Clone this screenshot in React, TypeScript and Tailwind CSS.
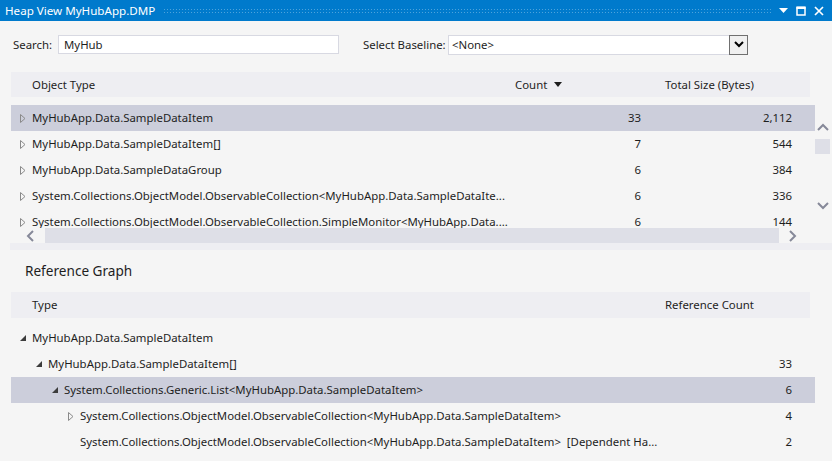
import React from "react";

const Hollow = () => (
  <svg width="6" height="9" viewBox="0 0 6 9" className="shrink-0">
    <polygon points="0.5,0.5 5,4.5 0.5,8.5" fill="none" stroke="#8a8a8a" strokeWidth="1" />
  </svg>
);

const Filled = () => (
  <svg width="6" height="6" viewBox="0 0 6 6" className="shrink-0">
    <polygon points="6,0 6,6 0,6" fill="#3c3c3c" />
  </svg>
);

type TopRow = { name: string; count: string; size: string; sel?: boolean };

const topRows: TopRow[] = [
  { name: "MyHubApp.Data.SampleDataItem", count: "33", size: "2,112", sel: true },
  { name: "MyHubApp.Data.SampleDataItem[]", count: "7", size: "544" },
  { name: "MyHubApp.Data.SampleDataGroup", count: "6", size: "384" },
  {
    name: "System.Collections.ObjectModel.ObservableCollection<MyHubApp.Data.SampleDataIte...",
    count: "6",
    size: "336",
  },
  {
    name: "System.Collections.ObjectModel.ObservableCollection.SimpleMonitor<MyHubApp.Data....",
    count: "6",
    size: "144",
  },
];

type GRow = { name: string; count: string; level: number; icon: "filled" | "hollow" | "none"; sel?: boolean };

const graphRows: GRow[] = [
  { name: "MyHubApp.Data.SampleDataItem", count: "", level: 0, icon: "filled" },
  { name: "MyHubApp.Data.SampleDataItem[]", count: "33", level: 1, icon: "filled" },
  {
    name: "System.Collections.Generic.List<MyHubApp.Data.SampleDataItem>",
    count: "6",
    level: 2,
    icon: "filled",
    sel: true,
  },
  {
    name: "System.Collections.ObjectModel.ObservableCollection<MyHubApp.Data.SampleDataItem>",
    count: "4",
    level: 3,
    icon: "hollow",
  },
  {
    name: "System.Collections.ObjectModel.ObservableCollection<MyHubApp.Data.SampleDataItem>  [Dependent Ha...",
    count: "2",
    level: 3,
    icon: "none",
  },
];

const Chevron = ({ dir }: { dir: "up" | "down" | "left" | "right" }) => {
  const d =
    dir === "up"
      ? "M1 7 L6 2 L11 7"
      : dir === "down"
      ? "M1 2 L6 7 L11 2"
      : dir === "left"
      ? "M7 1 L2 6 L7 11"
      : "M2 1 L7 6 L2 11";
  const w = dir === "up" || dir === "down" ? 12 : 9;
  const h = dir === "up" || dir === "down" ? 9 : 12;
  return (
    <svg width={w} height={h} viewBox={`0 0 ${w} ${h}`}>
      <path d={d} fill="none" stroke="#868999" strokeWidth="2" />
    </svg>
  );
};

export default function App() {
  return (
    <div className="w-[832px] h-[461px] overflow-hidden bg-[#F5F5F5] flex flex-col font-['Segoe_UI','Noto_Sans',sans-serif] text-[11.4px] text-[#1E1E1E] leading-[16px]">
      {/* Title bar */}
      <div className="h-[21px] bg-[#007ACC] flex items-center pl-[5px] pr-[8px] shrink-0">
        <span className="text-white text-[11.6px] whitespace-nowrap">Heap View MyHubApp.DMP</span>
        <div className="flex-1 ml-[8px] mr-[6px] h-[5px] bg-[radial-gradient(circle,#4da3dc_0.7px,transparent_0.9px)] bg-[length:3px_3px]" />
        <div className="flex items-center gap-[8px]">
          <svg width="9" height="5" viewBox="0 0 9 5">
            <polygon points="0,0 9,0 4.5,5" fill="#ffffff" />
          </svg>
          <svg width="10" height="10" viewBox="0 0 10 10">
            <rect x="1" y="1.5" width="8" height="7.5" fill="none" stroke="#ffffff" strokeWidth="1.5" />
            <rect x="0.5" y="0.5" width="9" height="2.5" fill="#ffffff" />
          </svg>
          <svg width="10" height="10" viewBox="0 0 10 10">
            <path d="M1 1 L9 9 M9 1 L1 9" stroke="#ffffff" strokeWidth="1.7" />
          </svg>
        </div>
      </div>

      {/* Search row */}
      <div className="mt-[13px] h-[21px] flex items-center pl-[13px] shrink-0">
        <span className="w-[45px] whitespace-nowrap">Search:</span>
        <div className="w-[281px] h-[19px] bg-white border border-[#D8D9E2] flex items-center pl-[5px]">MyHub</div>
        <span className="ml-[24px] w-[85px] whitespace-nowrap">Select Baseline:</span>
        <div className="w-[300px] h-[20px] bg-white border border-[#D8D9E2] flex items-center">
          <span className="flex-1 pl-[3px]">&lt;None&gt;</span>
          <div className="w-[19px] h-[20px] -mr-[1px] border border-[#707070] bg-[#F0F0F0] flex items-center justify-center">
            <svg width="10" height="7" viewBox="0 0 10 7">
              <path d="M1 1 L5 5 L9 1" fill="none" stroke="#000" strokeWidth="2" />
            </svg>
          </div>
        </div>
      </div>

      {/* Top grid header */}
      <div className="mt-[17px] ml-[11px] w-[799px] h-[25px] bg-[#EEEEF2] flex items-center shrink-0">
        <span className="pl-[21px] w-[504px]">Object Type</span>
        <span className="flex items-center gap-[7px] w-[150px]">
          Count
          <svg width="8" height="5" viewBox="0 0 8 5">
            <polygon points="0,0 8,0 4,5" fill="#1E1E1E" />
          </svg>
        </span>
        <span>Total Size (Bytes)</span>
      </div>

      {/* Top grid body */}
      <div className="mt-[8px] flex shrink-0">
        <div className="ml-[11px] w-[804px] flex flex-col">
          <div className="h-[123px] overflow-hidden">
            {topRows.map((r, i) => (
              <div
                key={i}
                className={`h-[26px] flex items-center ${r.sel ? "bg-[#CCCEDB]" : ""}`}
              >
                <div className="w-[504px] flex items-center pl-[9px] gap-[6px] whitespace-nowrap overflow-hidden">
                  <Hollow />
                  <span>{r.name}</span>
                </div>
                <span className="w-[126px] text-right">{r.count}</span>
                <span className="w-[151px] text-right">{r.size}</span>
              </div>
            ))}
          </div>
          {/* horizontal scrollbar */}
          <div className="h-[15px] w-[790px] flex items-center">
            <div className="w-[34px] flex justify-center pl-[4px]">
              <Chevron dir="left" />
            </div>
            <div className="w-[734px] h-[15px] bg-[#DEDFE7]" />
            <div className="flex-1 flex justify-center pl-[4px]">
              <Chevron dir="right" />
            </div>
          </div>
        </div>
        {/* vertical scrollbar */}
        <div className="w-[15px] flex flex-col items-center">
          <div className="mt-[17px] h-[10px] flex items-center">
            <Chevron dir="up" />
          </div>
          <div className="mt-[7px] w-[15px] h-[15px] bg-[#DEDFE7]" />
          <div className="mt-[46px] h-[10px] flex items-center">
            <Chevron dir="down" />
          </div>
        </div>
      </div>

      {/* splitter */}
      <div className="ml-[10px] h-[7px] bg-[#EEEEF2] shrink-0" />

      {/* Reference Graph */}
      <div className="h-[42px] flex items-center pl-[25px] text-[13.6px] shrink-0">Reference Graph</div>
      <div className="ml-[11px] w-[799px] h-[26px] bg-[#EEEEF2] flex items-center shrink-0">
        <span className="pl-[21px] w-[654px]">Type</span>
        <span>Reference Count</span>
      </div>
      <div className="mt-[7px] ml-[11px] w-[804px] flex flex-col">
        {graphRows.map((r, i) => (
          <div key={i} className={`h-[26px] flex items-center ${r.sel ? "bg-[#CCCEDB]" : ""}`}>
            <div
              className="w-[660px] flex items-center whitespace-nowrap overflow-hidden"
              style={{ paddingLeft: 9 + r.level * 16 }}
            >
              <span className="w-[12px] shrink-0 flex items-center">
                {r.icon === "filled" ? <Filled /> : r.icon === "hollow" ? <Hollow /> : null}
              </span>
              <span className="whitespace-pre">{r.name}</span>
            </div>
            <span className="w-[121px] text-right">{r.count}</span>
          </div>
        ))}
      </div>
    </div>
  );
}
